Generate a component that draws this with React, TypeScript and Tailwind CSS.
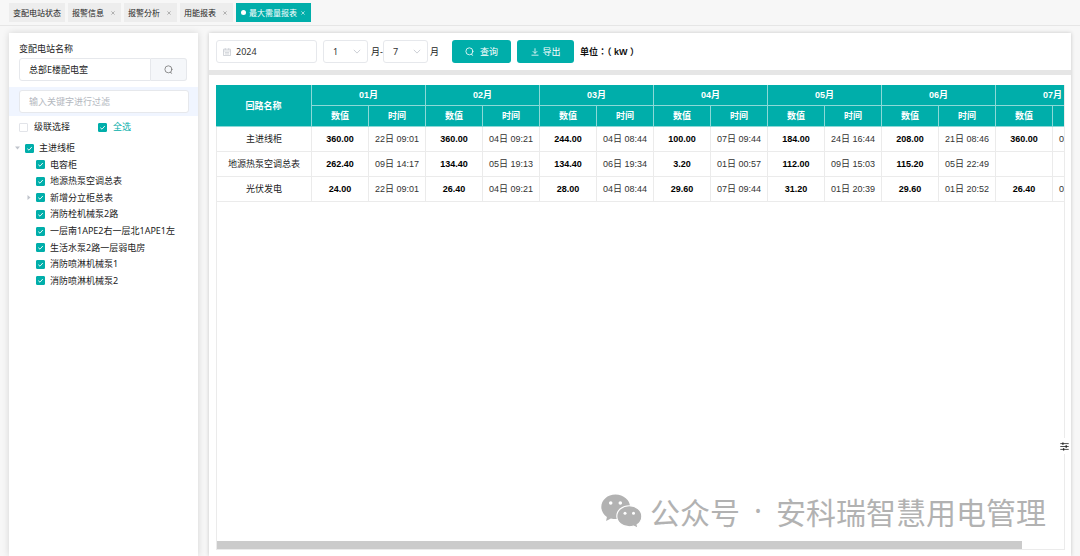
import { useState } from 'react';

const tabs = [
  { name: '变配电站状态', closable: false, active: false },
  { name: '报警信息', closable: true, active: false },
  { name: '报警分析', closable: true, active: false },
  { name: '用能报表', closable: true, active: false },
  { name: '最大需量报表', closable: true, active: true },
];

const circuits = [
  { name: '主进线柜', level: 0, arrow: 'down' },
  { name: '电容柜', level: 1, arrow: '' },
  { name: '地源热泵空调总表', level: 1, arrow: '' },
  { name: '新增分立柜总表', level: 1, arrow: 'right' },
  { name: '消防栓机械泵2路', level: 1, arrow: '' },
  { name: '一层南1APE2右一层北1APE1左', level: 1, arrow: '' },
  { name: '生活水泵2路一层弱电房', level: 1, arrow: '' },
  { name: '消防喷淋机械泵1', level: 1, arrow: '' },
  { name: '消防喷淋机械泵2', level: 1, arrow: '' },
];

const months = ['01月', '02月', '03月', '04月', '05月', '06月', '07月'];

const rows = [
  {
    name: '主进线柜',
    cells: ['360.00', '22日 09:01', '360.00', '04日 09:21', '244.00', '04日 08:44', '100.00', '07日 09:44', '184.00', '24日 16:44', '208.00', '21日 08:46', '360.00', '04日 09:21'],
  },
  {
    name: '地源热泵空调总表',
    cells: ['262.40', '09日 14:17', '134.40', '05日 19:13', '134.40', '06日 19:34', '3.20', '01日 00:57', '112.00', '09日 15:03', '115.20', '05日 22:49', '', ''],
  },
  {
    name: '光伏发电',
    cells: ['24.00', '22日 09:01', '26.40', '04日 09:21', '28.00', '04日 08:44', '29.60', '07日 09:44', '31.20', '01日 20:39', '29.60', '01日 20:52', '26.40', '04日 09:21'],
  },
];

function Check({ id, initial }: { id: string; initial: boolean }) {
  const [on, setOn] = useState(initial);
  return (
    <span className="grid size-[9px] shrink-0">
      <input
        id={id}
        type="checkbox"
        checked={on}
        onChange={(e) => setOn(e.target.checked)}
        className="col-start-1 row-start-1 size-[9px] appearance-none rounded-[1px] border border-[#e2e4e9] bg-white checked:border-[#00aeaa] checked:bg-[#00aeaa]"
      />
      {on && (
        <svg viewBox="0 0 9 9" className="pointer-events-none col-start-1 row-start-1 size-[9px]" fill="none" stroke="#fff" strokeWidth="0.9">
          <path d="M2.3 4.7 4 6.2 6.8 3" />
        </svg>
      )}
    </span>
  );
}

function SearchIcon({ className }: { className: string }) {
  return (
    <svg viewBox="0 0 10 10" className={className} fill="none" stroke="currentColor" strokeWidth="0.9" strokeLinecap="round">
      <circle cx="4.9" cy="4.8" r="3.9" />
      <path d="M7.2 8.4 8.6 9.2" />
    </svg>
  );
}

function MonthSelect({ label, value }: { label: string; value: string }) {
  return (
    <span className="grid h-[23px] w-[45px] items-center">
      <select
        aria-label={label}
        defaultValue={value}
        className="col-start-1 row-start-1 h-[23px] w-full appearance-none rounded-[3px] border border-[#e6e8ec] bg-white pl-[9px] text-[9px] text-[#333]"
      >
        {Array.from({ length: 12 }, (_, i) => (
          <option key={i}>{i + 1}</option>
        ))}
      </select>
      <svg viewBox="0 0 8 5" className="pointer-events-none col-start-1 row-start-1 mr-[7px] h-[5px] w-2 justify-self-end" fill="none" stroke="#c0c4cc" strokeWidth="0.8">
        <path d="M0.8 0.8 4 4.1 7.2 0.8" />
      </svg>
    </span>
  );
}

export default function App() {
  return (
    <div className="relative flex min-h-screen flex-col overflow-hidden bg-[#f7f7f7] font-['Noto_Sans','Noto_Sans_CJK_SC',sans-serif] text-[9px] leading-3 text-[#222]">
      <nav className="flex h-[26px] shrink-0 items-start gap-[3px] border-b border-[#e6e6e6] pt-[3px] pl-[9px]">
        {tabs.map((t) => (
          <div
            key={t.name}
            className={
              t.active
                ? 'flex h-[19px] items-center bg-[#00aeaa] px-[5px] text-[8px] text-white'
                : 'flex h-[19px] items-center bg-[#ededed] px-1 text-[8px] text-[#222]'
            }
          >
            {t.active && <span className="mr-[3px] size-[5px] rounded-full bg-white" />}
            <a href="#" className="whitespace-nowrap">{t.name}</a>
            {t.closable && (
              <button
                type="button"
                aria-label={'关闭' + t.name}
                className={t.active ? 'ml-[3px] grid h-3 w-[6px] place-items-center' : 'ml-1 grid h-3 w-[9px] place-items-center'}
              >
                <svg viewBox="0 0 4 4" className="size-1" stroke={t.active ? '#fff' : '#888'} strokeWidth="0.6">
                  <path d="M0.4 0.4 3.6 3.6M3.6 0.4 0.4 3.6" />
                </svg>
              </button>
            )}
          </div>
        ))}
      </nav>

      <div className="flex flex-1 gap-[11px] px-[9px] pt-[7px]">
        <aside className="w-[189px] shrink-0 bg-white pt-[9px] shadow-[0_0_7px_rgba(0,0,0,0.14)]">
          <label htmlFor="station" className="block px-[10px] leading-[14px]">变配电站名称</label>
          <div className="mt-[2px] flex h-[23px] px-[10px]">
            <input
              id="station"
              defaultValue="总部E楼配电室"
              className="w-[132px] rounded-l-[3px] border border-[#e6e8ec] bg-white pl-[9px] text-[9px] text-[#222]"
            />
            <button type="button" aria-label="搜索" className="grid w-9 place-items-center rounded-r-[3px] border border-l-0 border-[#e6e8ec] bg-[#f5f7fa] text-[#777]">
              <SearchIcon className="size-[9px]" />
            </button>
          </div>
          <div className="mt-[6px] bg-[#f0f5ff] px-[10px] py-[3px]">
            <input
              aria-label="过滤关键字"
              placeholder="输入关键字进行过滤"
              className="block h-[23px] w-[170px] rounded-[3px] border border-[#e6e8ec] bg-white pl-[9px] text-[9px] placeholder:text-[#b4b8c0]"
            />
          </div>
          <div className="mt-[5px] flex h-3 items-center pl-[10px]">
            <Check id="cascade" initial={false} />
            <label htmlFor="cascade" className="w-[70px] pl-[6px]">级联选择</label>
            <Check id="all" initial={true} />
            <label htmlFor="all" className="pl-[6px] text-[#00aeaa]">全选</label>
          </div>
          <ul className="mt-[7px] grid h-[149px] auto-rows-fr">
            {circuits.map((c, i) => (
              <li key={c.name} className={c.level === 0 ? 'flex items-center pl-[6px]' : 'flex items-center pl-[17px]'}>
                <span className="flex w-[10px] shrink-0">
                  {c.arrow === 'down' && (
                    <svg viewBox="0 0 5 4" className="h-1 w-[5px]" fill="#c0c4cc"><path d="M0 0.5h5L2.5 3.5z" /></svg>
                  )}
                  {c.arrow === 'right' && (
                    <svg viewBox="0 0 4 5" className="ml-px h-[5px] w-1" fill="#c0c4cc"><path d="M0.5 0v5L3.5 2.5z" /></svg>
                  )}
                </span>
                <Check id={'circuit' + i} initial={true} />
                <label htmlFor={'circuit' + i} className="pl-[5px] whitespace-nowrap">{c.name}</label>
              </li>
            ))}
          </ul>
        </aside>

        <main className="flex min-w-0 flex-1 flex-col gap-[5px] bg-[#e6e6e6] shadow-[0_0_4px_rgba(0,0,0,0.2)]">
          <form className="flex h-[37px] shrink-0 items-center bg-white px-[7px]" onSubmit={(e) => e.preventDefault()}>
            <div className="flex h-[23px] w-[101px] items-center rounded-[3px] border border-[#e6e8ec] pl-[6px]">
              <svg viewBox="0 0 8 8" className="size-2 shrink-0" fill="none" stroke="#c0c4cc" strokeWidth="0.7">
                <path d="M0.5 1.2h7v6.3h-7zM0.5 3h7M2.3 0.2v1.6M5.7 0.2v1.6M1.8 4.6h4.4M1.8 6h4.4" />
              </svg>
              <input aria-label="年份" defaultValue="2024" className="w-full min-w-0 pl-[5px] text-[9px] text-[#333]" />
            </div>
            <div className="ml-[6px] flex items-center">
              <MonthSelect label="开始月份" value="1" />
              <span className="w-[15px] pl-[3px] whitespace-nowrap">月-</span>
              <MonthSelect label="结束月份" value="7" />
              <span className="pl-[2px]">月</span>
            </div>
            <button type="submit" className="ml-[13px] flex h-[23px] w-[59px] items-center justify-center gap-[6px] rounded-[3px] bg-[#00aeaa] text-white">
              <SearchIcon className="size-[9px]" />
              查询
            </button>
            <button type="button" className="ml-[6px] flex h-[23px] w-[57px] items-center justify-center gap-1 rounded-[3px] bg-[#00aeaa] text-white">
              <svg viewBox="0 0 8 8" className="size-2" fill="none" stroke="currentColor" strokeWidth="0.8">
                <path d="M4 0.3v5M1.8 3.2 4 5.4 6.2 3.2M0.5 7.2h7" />
              </svg>
              导出
            </button>
            <strong className="ml-[6px] font-['Liberation_Sans','Noto_Sans_CJK_TC',sans-serif] font-bold whitespace-nowrap text-[#111]">单位：（ kW ）</strong>
          </form>

          <section className="flex flex-1 flex-col bg-white pt-[10px] pr-[6px] pb-[6px] pl-[7px]">
            <div className="flex flex-1 flex-col overflow-hidden border-r border-b border-[#ebebeb] font-['Liberation_Sans','Noto_Sans_CJK_SC',sans-serif]">
              <table className="w-[894px] table-fixed border-separate border-spacing-0 text-center whitespace-nowrap">
                <colgroup>
                  <col className="w-24" />
                  {months.map((m) => (
                    <col key={m} span={2} className="w-[57px]" />
                  ))}
                </colgroup>
                <thead className="bg-[#00aeaa] text-white">
                  <tr className="h-[21px]">
                    <th rowSpan={2} className="border-r border-b border-[#8cd9d7] p-0 font-bold">回路名称</th>
                    {months.map((m) => (
                      <th key={m} colSpan={2} className="border-r border-b border-[#8cd9d7] p-0 font-bold">{m}</th>
                    ))}
                  </tr>
                  <tr className="h-[21px]">
                    {months.flatMap((m) => [
                      <th key={m + 'v'} className="border-r border-b border-[#8cd9d7] p-0 font-bold">数值</th>,
                      <th key={m + 't'} className="border-r border-b border-[#8cd9d7] p-0 font-bold">时间</th>,
                    ])}
                  </tr>
                </thead>
                <tbody>
                  {rows.map((r) => (
                    <tr key={r.name} className="h-[25px]">
                      <td className="border-r border-b border-l border-[#ebebeb] p-0">{r.name}</td>
                      {r.cells.map((c, i) => (
                        <td
                          key={i}
                          className={
                            i % 2 === 0
                              ? 'border-r border-b border-[#ebebeb] p-0 font-bold text-black'
                              : 'border-r border-b border-[#ebebeb] p-0 text-[#333]'
                          }
                        >
                          {c}
                        </td>
                      ))}
                    </tr>
                  ))}
                </tbody>
              </table>
              <div className="flex flex-1 items-end border-l border-[#ebebeb]">
                <div className="h-2 w-[95%] bg-[#cbcbcb]" />
              </div>
            </div>
          </section>
        </main>
      </div>

      <button type="button" aria-label="设置" className="absolute right-[9px] bottom-[102px] grid h-4 w-[14px] place-items-center rounded-l-[2px] bg-white">
        <svg viewBox="0 0 9 9" className="size-[9px]" stroke="#222" strokeWidth="0.8">
          <path d="M0.3 1.6h8.4M0.3 4.5h8.4M0.3 7.4h8.4" />
          <path d="M2.9 0.4v2.4M6.2 3.3v2.4M3.6 6.2v2.4" strokeWidth="1.3" />
        </svg>
      </button>

      <div className="pointer-events-none absolute right-[34px] bottom-[25px] flex items-center font-['Noto_Sans_CJK_SC',sans-serif] text-[30px] leading-10 font-normal whitespace-nowrap text-[#b2b2b2]">
        <svg viewBox="0 0 41 35" className="mr-2 h-[35px] w-[41px]">
          <path fill="#b2b2b2" d="M14.5 0.5C6.5 0.5 0.3 6 0.3 13c0 4 2.2 7.5 5.6 10l-.8 4 4.8-2.6c1.7.5 3.3.7 5 .7 8 0 14.2-5.4 14.2-12.2S22.5 0.5 14.5 0.5z" />
          <path fill="#b2b2b2" stroke="#fff" strokeWidth="1.1" d="M28.3 11.7c-7 0-12.5 4.7-12.5 10.5s5.5 10.5 12.5 10.5c1.5 0 3-.2 4.3-.7l4.400 2.300-.9-3.600c2.900-2 4.700-5 4.700-8.500 0-5.800-5.500-10.500-12.500-10.500z" />
          <g fill="#fff">
            <circle cx="9.7" cy="9" r="1.8" />
            <circle cx="19.3" cy="9" r="1.8" />
            <circle cx="24" cy="19.2" r="1.5" />
            <circle cx="32.5" cy="19.2" r="1.5" />
          </g>
        </svg>
        <span>公众号</span>
        <span className="w-9 text-center font-['Noto_Sans',sans-serif]">·</span>
        <span>安科瑞智慧用电管理</span>
      </div>
    </div>
  );
}
